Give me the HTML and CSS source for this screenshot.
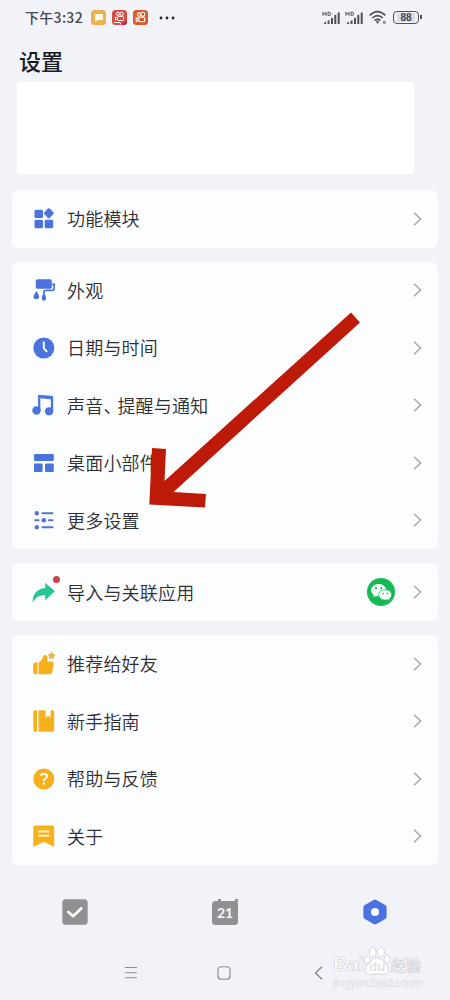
FILE: index.html
```
<!DOCTYPE html>
<html lang="zh-CN">
<head>
<meta charset="utf-8">
<title>设置</title>
<link rel="stylesheet" href="styles.css">
</head>
<body>
<div class="screen">
  <header class="status">
    <span class="time">下午3:32</span>
    <div class="apps">
      <svg width="15" height="15" viewBox="0 0 15 15"><rect width="15" height="15" rx="3.5" fill="#eeb04f"/><path d="M4 4h8v6H7l-3 2z" fill="#fffbe9"/></svg>
      <svg width="15" height="15" viewBox="0 0 15 15"><rect width="15" height="15" rx="3.5" fill="#d74b41"/><path d="M8 15l7-4v1a3 3 0 0 1-3 3z" fill="#b72570"/><g fill="none" stroke="#fff" stroke-width="1"><circle cx="6" cy="3.8" r="1.6"/><circle cx="9.7" cy="3.8" r="1.7"/><rect x="5.5" y="6.4" width="6" height="4.2" rx="1.2"/><path d="M5.5 8l-2-1v3l2-1M2 12.5h6l1 2"/></g></svg>
      <svg width="15" height="15" viewBox="0 0 15 15"><rect width="15" height="15" rx="3.5" fill="#d45a27"/><g fill="none" stroke="#fff" stroke-width="1.1"><circle cx="6" cy="4.6" r="1.7"/><circle cx="9.8" cy="4.3" r="2"/><rect x="5.8" y="7.2" width="6" height="4.6" rx="1.4"/><path d="M5.8 9l-2.6-1.3v3.8l2.6-1.3"/></g></svg>
    </div>
    <svg class="dots" width="16" height="4" viewBox="0 0 16 4"><g fill="#25262a"><circle cx="2" cy="2" r="1.4"/><circle cx="8" cy="2" r="1.4"/><circle cx="14" cy="2" r="1.4"/></g></svg>
    <div class="signals">
      <svg width="19" height="14" viewBox="0 0 19 14"><path d="M1 .8v4M4 .8v4M1 2.8h3M6 1.200v3.200h1.200q1.500 0 1.500-1.600T7.200 1.200z" fill="none" stroke="#505158" stroke-width="1"/><path d="M2 13v-1l2-1.500V13zM5.500 13v-3l2-1V13zM9 13V7h2v6zM12.300 13V4h2v9zM15.700 13V1.500h2V13z" fill="#505158"/></svg>
      <svg width="19" height="14" viewBox="0 0 19 14"><path d="M1 .8v4M4 .8v4M1 2.800h3M6 1.200v3.200h1.200q1.500 0 1.500-1.600T7.200 1.200z" fill="none" stroke="#505158" stroke-width="1"/><path d="M2 13v-1l2-1.500V13zM5.500 13v-3l2-1V13zM9 13V7h2v6zM12.300 13V4h2v9zM15.700 13V1.500h2V13z" fill="#505158"/></svg>
      <svg class="wifi" width="18" height="15" viewBox="0 0 18 15"><g fill="none" stroke="#505158" stroke-width="1.700"><path d="M.7 5.300q7.800-7.400 15.600 0M3.300 8q5.200-4.800 10.400 0M5.700 10.500q2.800-2.400 5.600 0"/></g><path d="M6.800 11.700q1.700-1.200 3.400 0L8.500 13.700z" fill="#505158"/><circle cx="15.300" cy="12.300" r="1.600" fill="#85868d"/></svg>
      <span class="battery"><span class="level">88</span></span>
    </div>
  </header>

  <h1 class="title">设置</h1>
  <div class="profile"></div>

  <main class="groups">
    <section class="card">
      <div class="row">
        <svg class="icon" viewBox="0 0 24 24" fill="#4a73de"><rect x="2.500" y="2.800" width="8.500" height="8.200" rx="1.500"/><rect x="12.900" y="2.400" width="7.800" height="7.800" rx="1.500" transform="rotate(45 16.800 6.300)"/><rect x="2.500" y="12.800" width="8.500" height="8.400" rx="1.500"/><rect x="12.700" y="12.800" width="8.500" height="8.400" rx="1.500"/></svg>
        <span class="label">功能模块</span><svg class="chevron" viewBox="0 0 9 14"><path d="M1 .8L7.600 7 1 13.200"/></svg>
      </div>
    </section>

    <section class="card">
      <div class="row">
        <svg class="icon" viewBox="0 0 24 24" fill="#4a73de"><rect x="3.800" y="1.300" width="16" height="9.500" rx="1.600"/><path d="M20 6.300h2.200v4q0 2-2 2h-6.500q-1.800 0-1.800 2v1.500" fill="none" stroke="#4a73de" stroke-width="1.700"/><path d="M12 14.500q-2.200 3-2.200 6 0 2.300 2 2.300t2.300-2.300q0-3-2.100-6zM4.500 13.300q-3 3.300-3 5.200a2.800 2.600 0 0 0 5.600 0q0-1.900-2.600-5.200z"/></svg>
        <span class="label">外观</span><svg class="chevron" viewBox="0 0 9 14"><path d="M1 .8L7.600 7 1 13.200"/></svg>
      </div>
      <div class="row">
        <svg class="icon" viewBox="0 0 24 24"><circle cx="11.800" cy="12" r="10.500" fill="#4a73de"/><path d="M11.800 5.500v6.800l3.300 3.600" fill="none" stroke="#fcfdff" stroke-width="1.900"/></svg>
        <span class="label">日期与时间</span><svg class="chevron" viewBox="0 0 9 14"><path d="M1 .8L7.600 7 1 13.200"/></svg>
      </div>
      <div class="row">
        <svg class="icon" viewBox="0 0 24 24" fill="#4a73de"><path d="M7.200 17V3.200L20 4.200V18" fill="none" stroke="#4a73de" stroke-width="2.300" stroke-linejoin="round"/><path d="M6 2.200l15 .8v3.400L8 5.200z"/><circle cx="4.500" cy="17.500" r="4.200"/><circle cx="17.100" cy="18.300" r="4.100"/></svg>
        <span class="label">声音<span class="comma">、</span>提醒与通知</span><svg class="chevron" viewBox="0 0 9 14"><path d="M1 .8L7.600 7 1 13.200"/></svg>
      </div>
      <div class="row">
        <svg class="icon" viewBox="0 0 24 24" fill="#4a73de"><rect x="2" y="3" width="19.800" height="7" rx="1"/><rect x="2" y="12.500" width="8.600" height="8.500" rx="1"/><rect x="13" y="12.500" width="8.800" height="8.500" rx="1"/></svg>
        <span class="label">桌面小部件</span><svg class="chevron" viewBox="0 0 9 14"><path d="M1 .8L7.600 7 1 13.200"/></svg>
      </div>
      <div class="row">
        <svg class="icon" viewBox="0 0 24 24" fill="#4e76cf"><circle cx="4.800" cy="5.300" r="2.200"/><circle cx="11.800" cy="12.300" r="2.300"/><circle cx="4.800" cy="19.200" r="2.200"/><path d="M10.500 5.300h10M3.200 12.300h3.300M17 12.300h3.500M10.500 19.200h10" stroke="#4e76cf" stroke-width="2" stroke-linecap="round"/></svg>
        <span class="label">更多设置</span><svg class="chevron" viewBox="0 0 9 14"><path d="M1 .8L7.600 7 1 13.200"/></svg>
      </div>
    </section>

    <section class="card">
      <div class="row">
        <span class="badged">
          <svg class="icon" viewBox="0 0 24 24"><path d="M13.200 2.700L23 11.300 13.200 20.300V15.200Q4.500 14.800.5 22.500.800 9.500 13.200 8z" fill="#25c596"/></svg>
          <b class="dot"></b>
        </span>
        <span class="label">导入与关联应用</span>
        <svg class="wechat" width="28" height="28" viewBox="0 0 28 28"><circle cx="14" cy="14" r="14" fill="#17b956"/><path d="M11.700 6C7.400 6 4.200 8.700 4.200 12.200c0 2 1.100 3.600 2.700 4.700l-.6 2.300 2.700-1.300c.9.200 1.800.4 2.700.4 4.200 0 7.400-2.800 7.400-6.200S15.900 6 11.700 6z" fill="#f4fff7"/><path d="M18.200 11.600c-3.700 0-6.600 2.300-6.600 5.200s2.900 5.300 6.600 5.300c.800 0 1.500-.1 2.200-.3l2.500 1.200-.6-2c1.500-1 2.400-2.500 2.400-4.200 0-2.900-2.900-5.200-6.500-5.200z" fill="#f4fff7" stroke="#17b956" stroke-width=".8"/><g fill="#169b4b"><circle cx="9" cy="10.200" r="1"/><circle cx="14.200" cy="10.200" r="1"/><circle cx="16.100" cy="15.500" r=".8"/><circle cx="20.400" cy="15.500" r=".8"/></g></svg>
        <svg class="chevron" viewBox="0 0 9 14"><path d="M1 .8L7.600 7 1 13.200"/></svg>
      </div>
    </section>

    <section class="card">
      <div class="row">
        <svg class="icon" viewBox="0 0 24 24" fill="#f6b01a"><path d="M1.200 12.500q0-2 2-2h2.400v11.800H3.200q-2 0-2-2zM6.600 10.500q2.500-.5 3.500-3.500l1.200-3q.6-1.400 2.200-1 2.300.6 2.100 3.500l-.3 3h4.800q2 0 1.600 2.500l-1.400 8q-.4 2.300-2.300 2.300H6.600z"/><path d="M19.600-.8l1.300 2.800 2.900.4-2.100 2 .5 3-2.600-1.400L17 7.400l.5-3-2.100-2 2.900-.4z" fill="#e6b343"/></svg>
        <span class="label">推荐给好友</span><svg class="chevron" viewBox="0 0 9 14"><path d="M1 .8L7.600 7 1 13.200"/></svg>
      </div>
      <div class="row">
        <svg class="icon" viewBox="0 0 24 24" fill="#f6b01a"><path d="M3 1.200h2v21.600H3q-1.700 0-1.700-1.700V3Q1.300 1.200 3 1.200zM6.600 1.200h7v8.300l2.500-2 2.500 2V1.200h1.800q1.800 0 1.800 1.800v18q0 1.800-1.800 1.800H6.600z"/><path d="M13.500 9l2.600-2.200L18.700 9v2h-5.200z" /></svg>
        <span class="label">新手指南</span><svg class="chevron" viewBox="0 0 9 14"><path d="M1 .8L7.600 7 1 13.200"/></svg>
      </div>
      <div class="row">
        <svg class="icon" viewBox="0 0 24 24"><circle cx="11.800" cy="12" r="10.500" fill="#f6b01a"/><path d="M8.700 9.200q.3-2.500 3.200-2.500 3 0 3 2.500 0 1.500-1.600 2.400-1.500.8-1.500 2.300" fill="none" stroke="#fffdf3" stroke-width="2"/><circle cx="11.800" cy="16.500" r="1.300" fill="#fffdf3"/></svg>
        <span class="label">帮助与反馈</span><svg class="chevron" viewBox="0 0 9 14"><path d="M1 .8L7.600 7 1 13.200"/></svg>
      </div>
      <div class="row">
        <svg class="icon" viewBox="0 0 24 24"><path d="M3 1.500h17.500q1.700 0 1.700 1.700v19.600L11.800 18 1.300 22.800V3.200Q1.300 1.500 3 1.500z" fill="#f6b01a"/><path d="M6.300 7.500h11M6.300 11.800h11" stroke="#fff3cd" stroke-width="1.900"/></svg>
        <span class="label">关于</span><svg class="chevron" viewBox="0 0 9 14"><path d="M1 .8L7.600 7 1 13.200"/></svg>
      </div>
    </section>
  </main>

  <nav class="tabs">
    <svg width="26" height="26" viewBox="0 0 26 26"><rect x=".3" y=".3" width="25.400" height="25.400" rx="3.500" fill="#8f9092"/><path d="M6.400 13l4.700 4.300 8.300-8" fill="none" stroke="#fbfbfd" stroke-width="2.700" stroke-linecap="round" stroke-linejoin="round"/></svg>
    <div class="calendar">21</div>
    <svg width="26" height="26" viewBox="0 0 26 26"><path d="M11.600 1q1.400-.8 2.800 0l8.800 4.900q1.400.8 1.400 2.400v9.400q0 1.600-1.400 2.400L14.400 25q-1.400.8-2.800 0l-8.800-4.900q-1.400-.8-1.400-2.400V8.300q0-1.600 1.400-2.400z" fill="#4b70e0"/><circle cx="13" cy="13" r="4" fill="#fafcff"/></svg>
  </nav>

  <footer class="system">
    <svg width="14" height="14" viewBox="0 0 14 14"><path d="M1 1.500h12M1 6.700h12M1 11.800h12" stroke="#8c8d92" stroke-width="1.100"/></svg>
    <svg class="home" width="14" height="14" viewBox="0 0 14 14"><rect x="1" y=".8" width="12" height="12.400" rx="3" fill="none" stroke="#85868c" stroke-width="1.100"/></svg>
    <svg width="14" height="14" viewBox="0 0 14 14"><path d="M10 .8L3.500 7l6.500 6.200" fill="none" stroke="#7f8085" stroke-width="1.200"/></svg>
  </footer>

  <svg class="arrow" width="212" height="208" viewBox="0 0 212 208"><path d="M202 12.500L15.500 181 17 149 3 148 .3 204.500 56 207.500 57 194 24.500 192 211 22.500z" fill="#bd1a0a"/></svg>

  <div class="watermark">
    <div class="brand">
      <span class="latin">Bai</span>
      <svg width="28" height="32" viewBox="0 0 28 32" fill="#fff" stroke="#d3d5da" stroke-width="1"><ellipse cx="4" cy="15" rx="3" ry="4"/><ellipse cx="9.700" cy="7" rx="3.400" ry="4.800"/><ellipse cx="18" cy="7" rx="3.400" ry="4.800"/><ellipse cx="24" cy="14" rx="3" ry="4"/><path d="M14 12.500q3.500 0 6.500 4.500 5 4 5 7.500 0 5-6 5-5.500-.8-11 0-6 0-6-5 0-3.500 5-7.500 3-4.500 6.500-4.500z"/><text x="6.300" y="26" class="du">du</text></svg>
      <span class="han">经验</span>
    </div>
    <div class="site">jingyan.baidu.com</div>
  </div>
</div>
</body>
</html>
```

FILE: styles.css
```
* { box-sizing: border-box; }
body {
  margin: 0;
  background: #f2f3f8;
  font-family: "Noto Sans CJK SC", sans-serif;
  color: #2e2f33;
}
.screen {
  position: relative;
  width: 450px;
  height: 1000px;
  overflow: hidden;
  display: flex;
  flex-direction: column;
}
.screen svg { display: block; flex: none; overflow: visible; }

.status {
  height: 36px;
  padding: 0 31px 1px 25px;
  display: flex;
  align-items: center;
  font-size: 14px;
}
.time {
  width: 66px;
  padding-bottom: 1px;
  line-height: 20px;
  font-weight: 500;
  color: #45464c;
  white-space: nowrap;
  letter-spacing: .3px;
}
.apps { display: flex; gap: 6px; }
.dots { margin-left: 11px; }
.signals { margin-left: auto; display: flex; align-items: center; gap: 4px; }
.wifi { margin: 0 2px 0 1px; }
.battery {
  position: relative;
  width: 26px;
  height: 13px;
  padding: 1px 3px;
  border: 1.5px solid #505158;
  border-radius: 4px;
  display: flex;
}
.battery::after {
  content: "";
  position: absolute;
  right: -3.5px;
  top: 3px;
  width: 2px;
  height: 4px;
  background: #505158;
}
.level {
  flex: 1;
  background: #dcdde2;
  font: bold 10px/9px "Liberation Sans", sans-serif;
  text-align: center;
  color: #44454b;
}

.title {
  margin: 0;
  height: 46px;
  padding: 8px 0 0 19px;
  font-size: 22px;
  line-height: 32px;
  font-weight: 500;
  color: #191a1d;
}
.profile { width: 397px; height: 92px; margin-left: 17px; background: #fff; }

.groups {
  padding: 16px 12px 0;
  display: flex;
  flex-direction: column;
  gap: 14.2px;
}
.card { background: #fcfdff; border-radius: 7px; }
.row {
  height: 57.5px;
  padding: 0 15px 0 20px;
  display: flex;
  align-items: center;
}
.icon { width: 24px; height: 24px; }
.badged { position: relative; }
.dot {
  position: absolute;
  right: -4px;
  top: -4px;
  width: 7px;
  height: 7px;
  border-radius: 50%;
  background: #ca4449;
}
.label {
  flex: 1;
  margin-left: 11px;
  padding-bottom: 1px;
  font-size: 18px;
  line-height: 28px;
  font-weight: 350;
  letter-spacing: .2px;
}
.comma { letter-spacing: -4px; }
.wechat { margin-right: 18px; }
.chevron {
  width: 9px;
  height: 14px;
  margin-right: 1px;
  fill: none;
  stroke: #a6a7ab;
  stroke-width: 1.5;
}

.tabs {
  height: 95px;
  padding-bottom: 1px;
  display: grid;
  grid-template-columns: repeat(3, 150px);
  place-items: center;
}
.calendar {
  position: relative;
  width: 26px;
  height: 24px;
  margin-top: 2px;
  border-radius: 3.5px;
  background: #8f9092;
  font: bold 14px/23px Lato, sans-serif;
  text-align: center;
  color: #fafafc;
}
.calendar::before {
  content: "";
  position: absolute;
  left: 6px;
  top: -2px;
  width: 14px;
  height: 3px;
  border: solid #8f9092;
  border-width: 0 3px;
}
.system {
  height: 26px;
  padding: 0 124px;
  display: flex;
  align-items: center;
  justify-content: space-between;
}
.home { margin-right: 3px; }

.arrow { position: absolute; left: 149px; top: 300px; }

.watermark { position: absolute; left: 333px; top: 945px; color: #fff; }
.brand {
  height: 32px;
  display: flex;
  align-items: flex-end;
  -webkit-text-stroke: .7px #cfd1d7;
}
.latin { width: 30px; font: bold 20px/25px "Liberation Sans", sans-serif; }
.han { font-size: 15px; line-height: 25px; font-weight: 500; }
.du { font: bold 13px "Liberation Sans", sans-serif; fill: #dfe1e5; stroke: none; }
.site {
  font: 12px/12px "Liberation Sans", sans-serif;
  letter-spacing: -.45px;
  color: #dfe0e6;
}
```
